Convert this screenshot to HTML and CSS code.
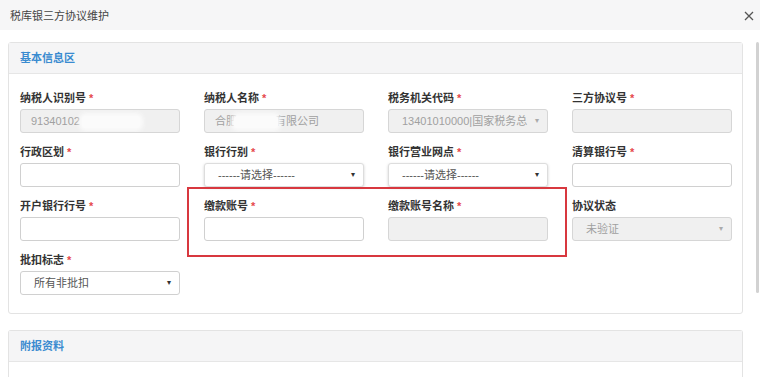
FILE: index.html
```html
<!DOCTYPE html>
<html lang="zh-CN">
<head>
<meta charset="utf-8">
<title>税库银三方协议维护</title>
<link rel="stylesheet" href="styles.css">
</head>
<body>
<div class="dialog">
  <div class="dlg-head">
    <span class="dlg-title">税库银三方协议维护</span>
    <svg class="close" width="10" height="10" viewBox="0 0 10 10"><path d="M1 1L9 9M9 1L1 9" stroke="#555" stroke-width="1.3" fill="none"/></svg>
  </div>
  <div class="dlg-main">
    <div class="dlg-body">
      <section class="panel">
        <div class="panel-head">基本信息区</div>
        <div class="panel-body">
          <div class="form-grid">
            <div class="field"><div class="lbl">纳税人识别号<i>*</i></div><div class="ctl ro">91340102<span class="mask mask-a"></span></div></div>
            <div class="field"><div class="lbl">纳税人名称<i>*</i></div><div class="ctl ro">合肥<span class="mask mask-b"></span>有限公司</div></div>
            <div class="field"><div class="lbl">税务机关代码<i>*</i></div><div class="ctl ro sel dis">13401010000|国家税务总<span class="arrow">▾</span></div></div>
            <div class="field"><div class="lbl">三方协议号<i>*</i></div><div class="ctl ro"></div></div>

            <div class="field"><div class="lbl">行政区划<i>*</i></div><div class="ctl"></div></div>
            <div class="field"><div class="lbl">银行行别<i>*</i></div><div class="ctl sel shadow">------请选择------<span class="arrow">▾</span></div></div>
            <div class="field"><div class="lbl">银行营业网点<i>*</i></div><div class="ctl sel shadow">------请选择------<span class="arrow">▾</span></div></div>
            <div class="field"><div class="lbl">清算银行号<i>*</i></div><div class="ctl"></div></div>

            <div class="field"><div class="lbl">开户银行行号<i>*</i></div><div class="ctl"></div></div>
            <div class="field"><div class="lbl">缴款账号<i>*</i></div><div class="ctl"></div></div>
            <div class="field"><div class="lbl">缴款账号名称<i>*</i></div><div class="ctl ro"></div></div>
            <div class="field"><div class="lbl">协议状态</div><div class="ctl ro sel dis">未验证<span class="arrow">▾</span></div></div>

            <div class="field"><div class="lbl">批扣标志<i>*</i></div><div class="ctl sel">所有非批扣<span class="arrow">▾</span></div></div>
          </div>
          <div class="highlight"></div>
        </div>
      </section>
      <section class="panel panel-2">
        <div class="panel-head">附报资料</div>
        <div class="panel-body body-2"></div>
      </section>
    </div>
    <div class="scrollbar"><div class="thumb"></div></div>
  </div>
</div>
</body>
</html>
```

FILE: styles.css
```css
* { box-sizing: border-box; }
html, body { margin: 0; padding: 0; }
body {
  width: 760px;
  height: 377px;
  overflow: hidden;
  background: #fff;
  font-family: "Liberation Sans", "Noto Sans CJK SC", sans-serif;
  font-size: 11px;
  color: #333;
}
.dialog { width: 760px; height: 377px; display: flex; flex-direction: column; overflow: hidden; }
.dlg-head {
  height: 30px;
  flex: none;
  background: #f6f6f7;
  display: flex;
  align-items: center;
  justify-content: space-between;
  padding: 0 6px 0 10px;
}
.dlg-title { font-size: 11px; color: #444; }
.close { display: block; margin-top: 1px; }
.dlg-main { flex: 1; display: flex; min-height: 0; overflow: hidden; }
.dlg-body { width: 752px; padding: 12px 9px 0 8px; }
.panel {
  border: 1px solid #e3e3e3;
  border-radius: 3px;
  background: #fff;
}
.panel-head {
  height: 31px;
  background: #f5f5f6;
  border-bottom: 1px solid #e6e6e6;
  padding-left: 11px;
  line-height: 30px;
  color: #3a8bd0;
  font-weight: bold;
  font-size: 11px;
}
.panel-body { position: relative; padding: 16px 11px 18px; }
.form-grid {
  display: grid;
  grid-template-columns: repeat(4, 160px);
  column-gap: 24px;
  row-gap: 11px;
}
.lbl {
  height: 16px;
  line-height: 16px;
  margin-bottom: 3px;
  font-weight: bold;
  color: #333;
  white-space: nowrap;
}
.lbl i { font-style: normal; color: #e5484d; margin-left: 3px; }
.ctl {
  position: relative;
  height: 24px;
  border: 1px solid #d0d0d0;
  border-radius: 3px;
  background: #fff;
  line-height: 22px;
  padding-left: 10px;
  color: #555;
  white-space: nowrap;
  overflow: hidden;
}
.ctl.ro { background: #f0f0f0; color: #a0a0a0; border-color: #d6d6d6; }
.ctl.sel { padding-left: 13px; }
.ctl.shadow { box-shadow: 0 1px 3px rgba(0,0,0,0.18); border-color: #ddd; }
.ctl.dis { padding-left: 13px; }
.arrow {
  position: absolute;
  right: 8px;
  top: 0;
  font-size: 8px;
  color: #333;
}
.dis .arrow { color: #aaa; }
.mask {
  display: inline-block;
  vertical-align: middle;
  height: 12px;
  background: #fbfbfb;
  box-shadow: 0 0 4px 3px #fbfbfb;
  border-radius: 4px;
}
.mask-a { width: 58px; margin-left: 2px; }
.mask-b { width: 44px; margin-left: -3px; margin-right: -3px; position: relative; }
.highlight {
  position: absolute;
  left: 178px;
  top: 113px;
  width: 380px;
  height: 70px;
  border: 2px solid #d8383f;
  pointer-events: none;
}
.panel-2 { margin-top: 16px; border-bottom: none; border-radius: 3px 3px 0 0; }
.body-2 { height: 16px; padding: 0; }
.scrollbar {
  width: 8px;
  flex: none;
  padding-top: 12px;
  display: flex;
  justify-content: center;
}
.thumb {
  width: 3px;
  height: 251px;
  background: #d2d2d2;
  border-radius: 2px;
  margin-left: 2px;
}
```
